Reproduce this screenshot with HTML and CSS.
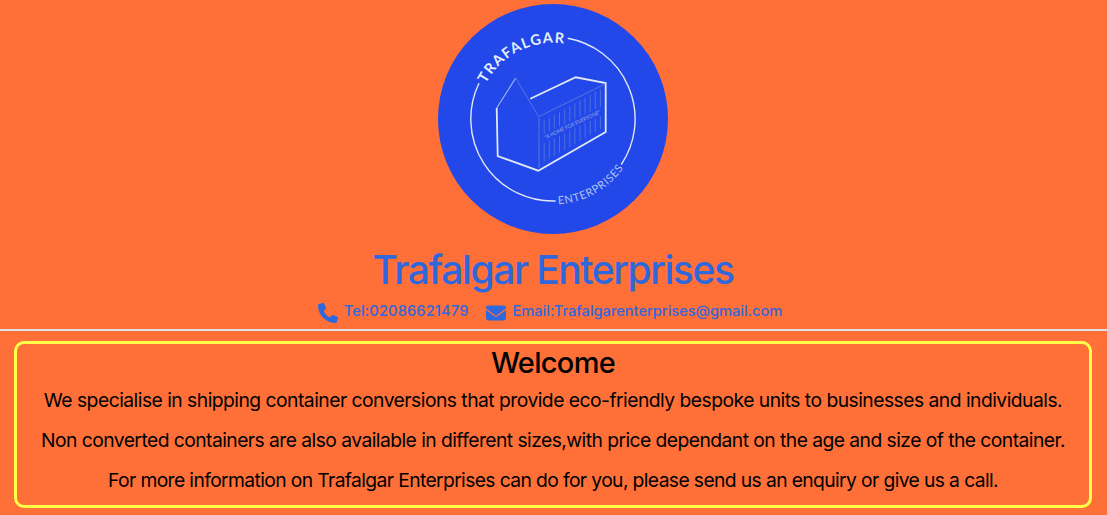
FILE: index.html
```html
<!DOCTYPE html>
<html lang="en">
<head>
<meta charset="utf-8">
<title>Trafalgar Enterprises</title>
<link rel="stylesheet" href="styles.css">
</head>
<body>
<header class="site-header">
  <svg class="logo" viewBox="0 0 230 230" role="img" aria-label="Trafalgar Enterprises logo">
    <defs>
      <path id="arc-top" d="M48 79.7A76.5 76.5 0 0 1 145 44.6"/>
      <path id="arc-bottom" d="M120.2 200.3A85.5 85.5 0 0 0 195 146"/>
    </defs>
    <circle class="disc" cx="115" cy="115" r="115"/>
    <path class="ring" d="M129.7 34.3A82 82 0 0 1 183.3 160.5M117.7 197A82 82 0 0 1 41 79.3"/>
    <path class="edge" d="M92.3 94.7 137.7 73.3 167.7 79V128L100.3 166.7 59.7 152 58.7 104"/>
    <path class="gable" d="M58.7 104 77.7 74"/>
    <path class="faint" d="M77.7 74 100.7 112.7 167 80M101 114V164"/>
    <path class="slats" d="M106.2 116.7V129.5M111.3 113.8V127.1M116.4 110.9V124.7M121.5 108.1V122.3M126.7 105.2V119.9M131.8 102.3V117.5M136.9 99.4V115.1M142 96.5V112.7M147.1 93.6V110.3M152.2 90.8V107.9M157.3 87.9V105.5M162.4 85V103M106.2 139V157.7M111.3 136.5V154.7M116.4 134.1V151.8M121.5 131.6V148.8M126.7 129.2V145.8M131.8 126.7V142.8M136.9 124.3V139.9M142 121.8V136.9M147.1 119.4V133.9M152.2 116.9V131M157.3 114.5V128M162.4 112V125"/>
    <text class="motto" transform="translate(107.7 135.4) rotate(-25.2)" textLength="61" lengthAdjust="spacingAndGlyphs">"A HOME FOR EVERYONE"</text>
    <text class="name-top"><textPath href="#arc-top" textLength="93">TRAFALGAR</textPath></text>
    <text class="name-bottom"><textPath href="#arc-bottom" textLength="77">ENTERPRISES</textPath></text>
  </svg>
  <h1 class="title">Trafalgar Enterprises</h1>
  <div class="contacts">
    <div class="contact">
      <svg class="icon phone" viewBox="0 0 512 512"><path d="M164.9 24.6c-7.700-18.600-28-28.500-47.400-23.200l-88 24C12.100 30.200 0 46 0 64c0 247.400 200.600 448 448 448 18 0 33.800-12.100 38.600-29.500l24-88c5.300-19.400-4.600-39.700-23.200-47.400l-96-40c-16.300-6.800-35.200-2.100-46.300 11.600L304.700 368C234.300 334.700 177.300 277.700 144 207.300l49.300-40.300c13.700-11.200 18.400-30 11.600-46.300z"/></svg>
      <span class="tel">Tel:02086621479</span>
    </div>
    <div class="contact">
      <svg class="icon" viewBox="0 0 512 512"><path d="M48 64C21.500 64 0 85.500 0 112c0 15.100 7.100 29.300 19.200 38.400l217.600 163.200c11.400 8.500 27 8.500 38.400 0l217.600-163.200c12.100-9.100 19.200-23.300 19.200-38.400 0-26.500-21.500-48-48-48zM0 176v208c0 35.300 28.700 64 64 64h384c35.300 0 64-28.700 64-64V176L294.400 339.200c-22.800 17.100-54 17.100-76.800 0z"/></svg>
      <span class="email">Email:Trafalgarenterprises@gmail.com</span>
    </div>
  </div>
</header>
<main class="welcome">
  <h2 class="heading">Welcome</h2>
  <p class="line services">We specialise in shipping container conversions that provide eco-friendly bespoke units to businesses and individuals.</p>
  <p class="line pricing">Non converted containers are also available in different sizes,with price dependant on the age and size of the container.</p>
  <p class="line enquiry">For more information on Trafalgar Enterprises can do for you, please send us an enquiry or give us a call.</p>
</main>
</body>
</html>
```
FILE: styles.css
```css
* { box-sizing: border-box; }
body {
  margin: 0;
  height: 515px;
  overflow: hidden;
  background: #ff7038;
  color: #000;
  font-family: Inter, "Liberation Sans", sans-serif;
  text-align: center;
}
.site-header {
  display: flex;
  flex-direction: column;
  align-items: center;
  height: 331px;
  padding: 4px 1px 0 0;
  border-bottom: 2px solid #dee2e6;
  color: #2f67dc;
}
.logo { display: block; width: 230px; height: 230px; flex: none; }
.disc { fill: #2348e9; }
.ring, .edge, .gable, .faint, .slats { fill: none; stroke: #dfe8f5; }
.ring { stroke-width: 1.4; }
.edge { stroke-width: 1.8; }
.gable { stroke: #9fb5ee; stroke-width: 1.2; }
.faint { stroke: #5377dd; stroke-width: 1; }
.slats { stroke: #4b70df; stroke-width: 1; }
.motto { font: 5.5px Lato, sans-serif; fill: #8fa9e2; }
.name-top { font: bold 14.5px Lato, sans-serif; fill: #e3effa; }
.name-bottom { font: 11px Lato, sans-serif; fill: #afc5ee; }
.title {
  margin: 12px 0 0;
  font-size: 39px;
  font-weight: 500;
  line-height: 48px;
  letter-spacing: -1.4px;
  word-spacing: -0.5px;
}
.contacts { display: flex; gap: 18px; margin: 7px 6px 0 0; }
.contact { display: flex; align-items: center; gap: 6px; height: 24px; font-size: 14.7px; font-weight: 500; }
.contact span { position: relative; top: -2px; }
.tel { letter-spacing: 0.1px; }
.email { letter-spacing: -0.05px; }
.icon { width: 20px; height: 20px; fill: currentColor; }
.phone { margin-bottom: 1px; }
.welcome {
  height: 167px;
  margin: 10px 15px 0 14px;
  padding-top: 2px;
  border: 3px solid #ffff4a;
  border-radius: 10px;
}
.heading {
  margin: 0 0 8px;
  font-size: 29px;
  font-weight: 500;
  line-height: 34px;
  letter-spacing: -0.7px;
}
.line { margin: 0 0 16px; font-size: 19.3px; line-height: 24px; white-space: nowrap; }
.services { letter-spacing: -0.52px; }
.pricing { letter-spacing: -0.55px; }
.enquiry { letter-spacing: -0.62px; }
```
